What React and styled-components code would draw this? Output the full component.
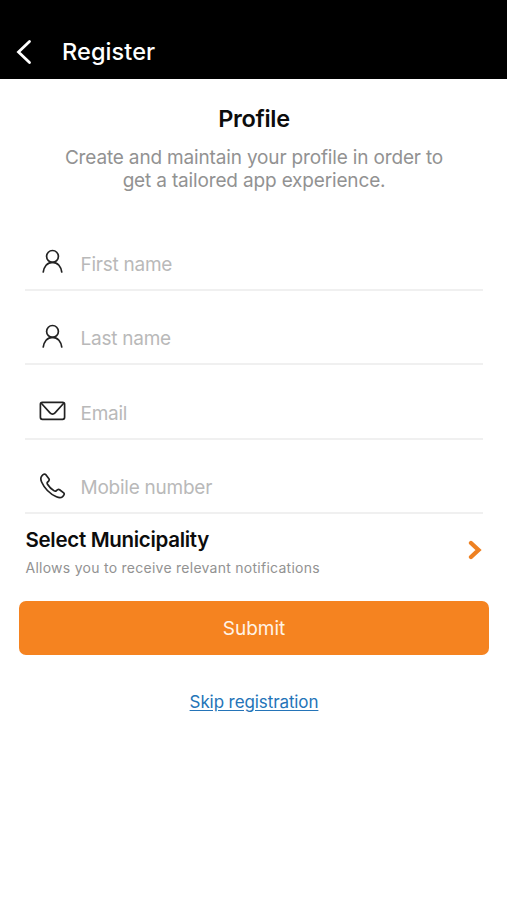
import React, { useState } from 'react';
import styled, { createGlobalStyle } from 'styled-components';

const fields = [
  { name: 'firstName', label: 'First name', type: 'text', icon: PersonIcon },
  { name: 'lastName', label: 'Last name', type: 'text', icon: PersonIcon },
  { name: 'email', label: 'Email', type: 'email', icon: MailIcon },
  { name: 'mobile', label: 'Mobile number', type: 'tel', icon: PhoneIcon },
];

function PersonIcon() {
  return (
    <FieldSvg viewBox="0 0 28 28">
      <circle cx="13.5" cy="8.4" r="5.9" />
      <path d="M4.100 24.700C4.700 18.700 8.300 14.300 13.500 14.300s8.800 4.400 9.400 10.400" strokeLinecap="butt" />
    </FieldSvg>
  );
}

function MailIcon() {
  return (
    <FieldSvg viewBox="0 0 28 28">
      <rect x="1.400" y="5.300" width="24.200" height="17" rx="2" />
      <path d="M2.300 6.300l8.700 9.600c1.500 1.600 3.500 1.600 5 0l8.700-9.600" />
    </FieldSvg>
  );
}

function PhoneIcon() {
  return (
    <FieldSvg viewBox="0 0 28 28">
      <path d="M2.800 4C4 2.500 5.700 1.500 6.700 2.600l3.200 4.200c.9 1.300-.1 2.300-1.200 3.200-.8.700-.7 1.400-.2 2.200 1.800 2.900 4 5 6.700 6.700.8.500 1.500.5 2.200-.3 1-1.100 2-1.800 3.200-.9l4.100 3.200c1.200 1 .1 2.700-1.300 3.900-1.500 1.300-3.600 1.100-6 0C10.900 21.800 5.500 16.400 2.600 10 1.600 7.700 1.500 5.600 2.800 4z" />
    </FieldSvg>
  );
}

function App() {
  const [values, setValues] = useState({});

  const handleChange = (e) => {
    setValues({ ...values, [e.target.name]: e.target.value });
  };

  return (
    <>
      <GlobalStyles />
      <Header>
        <BackButton type="button" aria-label="Back">
          <svg width="18" height="26" viewBox="0 0 18 26" fill="none" stroke="#fff" strokeWidth="2.8">
            <path d="M14.500 2.500L3.500 13l11 10.500" strokeLinecap="round" strokeLinejoin="miter" />
          </svg>
        </BackButton>
        <HeaderTitle>Register</HeaderTitle>
      </Header>
      <Form onSubmit={(e) => e.preventDefault()}>
        <Title>Profile</Title>
        <Intro>
          Create and maintain your profile in order to
          <br />
          get a tailored app experience.
        </Intro>
        <Fields>
          {fields.map(({ name, label, type, icon: Icon }) => (
            <Field key={name}>
              <Icon />
              <Input
                name={name}
                type={type}
                placeholder={label}
                value={values[name] || ''}
                onChange={handleChange}
              />
            </Field>
          ))}
        </Fields>
        <Municipality type="button">
          <span>
            <MunicipalityTitle>Select Municipality</MunicipalityTitle>
            <MunicipalityHint>Allows you to receive relevant notifications</MunicipalityHint>
          </span>
          <Chevron width="14" height="20" viewBox="0 0 14 20">
            <path d="M3 3l7.500 7L3 17" />
          </Chevron>
        </Municipality>
        <SubmitButton type="submit">Submit</SubmitButton>
        <SkipLink href="#">Skip registration</SkipLink>
      </Form>
    </>
  );
}

export default App;

const GlobalStyles = createGlobalStyle`
  * {
    box-sizing: border-box;
  }

  body {
    margin: 0;
    background: #fff;
    font-family: Inter, 'Liberation Sans', sans-serif;
  }

  button {
    border: 0;
    padding: 0;
    background: none;
    font-family: inherit;
  }
`;

const Header = styled.header`
  display: flex;
  align-items: center;
  height: 79px;
  padding: 24px 15px 0;
  background: #000;
  color: #fff;
`;

const BackButton = styled.button`
  display: flex;
  width: 47px;
`;

const HeaderTitle = styled.h1`
  margin: 0;
  font-size: 23.5px;
  font-weight: 500;
  line-height: 30px;
  letter-spacing: 0.1px;
`;

const Form = styled.form`
  display: flex;
  flex-direction: column;
  padding: 25px 18px 0 19px;
`;

const Title = styled.h2`
  margin: 0;
  font-size: 23.5px;
  font-weight: 600;
  line-height: 30px;
  letter-spacing: -0.3px;
  text-align: center;
  color: #0c0c0c;
`;

const Intro = styled.p`
  margin: 12px 0 0;
  font-size: 19px;
  line-height: 23.4px;
  letter-spacing: -0.16px;
  text-align: center;
  color: #929292;
`;

const Fields = styled.div`
  padding: 23.3px 6px 0;
`;

const Field = styled.label`
  display: flex;
  align-items: flex-end;
  height: 74.6px;
  padding: 0 0 12.5px 14px;
  border-bottom: 2px solid #f0f0f0;
`;

const FieldSvg = styled.svg`
  flex: none;
  width: 28px;
  height: 28px;
  margin-right: 13.5px;
  fill: none;
  stroke: #222;
  stroke-width: 1.7;
  stroke-linecap: round;
  stroke-linejoin: round;
`;

const Input = styled.input`
  flex: 1;
  min-width: 0;
  height: 24px;
  padding: 0;
  border: 0;
  outline: 0;
  background: none;
  font-family: inherit;
  font-size: 19px;
  letter-spacing: -0.25px;

  &::placeholder {
    color: #b9b9b9;
    opacity: 1;
  }
`;

const Municipality = styled.button`
  display: flex;
  align-items: flex-start;
  justify-content: space-between;
  height: 75.4px;
  margin-top: 11px;
  padding: 0 7px 0 6.5px;
  text-align: left;
`;

const MunicipalityTitle = styled.span`
  display: block;
  font-size: 20.5px;
  font-weight: 600;
  line-height: 29px;
  letter-spacing: -0.3px;
  color: #0c0c0c;
`;

const MunicipalityHint = styled.span`
  display: block;
  margin-top: 4px;
  font-size: 14px;
  line-height: 20px;
  letter-spacing: 0.26px;
  color: #929292;
`;

const Chevron = styled.svg`
  margin-top: 14.5px;
  fill: none;
  stroke: #ee8122;
  stroke-width: 4.3;
  stroke-linecap: round;
`;

const SubmitButton = styled.button`
  height: 54px;
  padding-top: 1px;
  border-radius: 7px;
  background: #f58320;
  font-size: 19px;
  color: #fff3e6;
`;

const SkipLink = styled.a`
  align-self: center;
  margin-top: 35px;
  font-size: 17px;
  line-height: 24px;
  letter-spacing: -0.1px;
  color: #2474b8;
  text-underline-offset: 2px;
`;
